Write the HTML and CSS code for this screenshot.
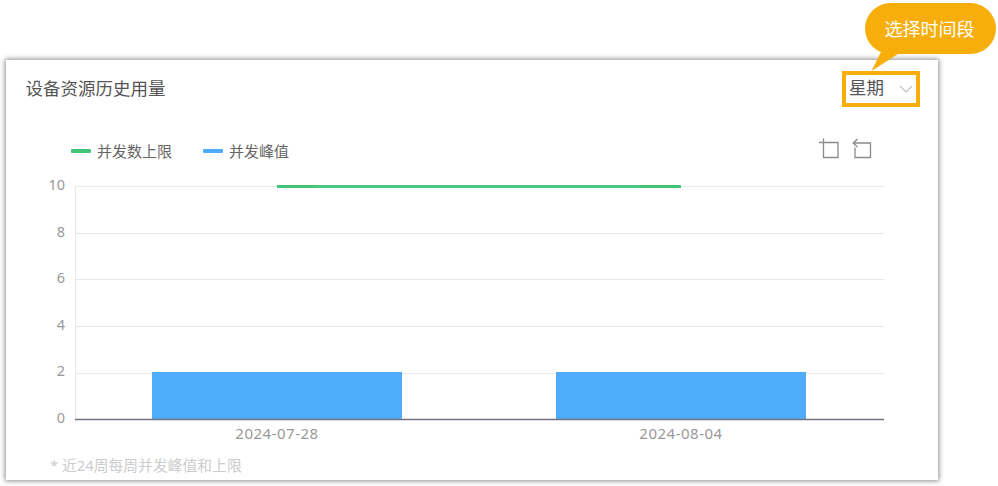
FILE: index.html
```html
<!DOCTYPE html>
<html lang="zh-CN">
<head>
<meta charset="utf-8">
<title>设备资源历史用量</title>
<link rel="stylesheet" href="styles.css">
</head>
<body>
<section class="card">
  <header class="card-head">
    <h2 class="title">设备资源历史用量</h2>
    <div class="select">
      <span class="select-value">星期</span>
      <svg class="chevron" width="14" height="8" viewBox="0 0 14 8"><path d="M1 1l6 6 6-6" fill="none" stroke="#c4c4c4" stroke-width="1.2"/></svg>
    </div>
  </header>
  <div class="toolbar">
    <ul class="legend">
      <li class="legend-item"><i class="swatch swatch-green"></i>并发数上限</li>
      <li class="legend-item"><i class="swatch swatch-blue"></i>并发峰值</li>
    </ul>
    <div class="tools">
      <svg width="20" height="20" viewBox="0 0 20 20"><path d="M0 3.500H19V18.500H4.500V-.500" fill="none" stroke="#8a8a8a" stroke-width="1.300"/></svg>
      <svg width="20" height="20" viewBox="0 0 20 20"><path d="M5.500 0L1.200 4 5.500 8M1.200 4H18.500V18.500H3V8.500" fill="none" stroke="#8a8a8a" stroke-width="1.300"/></svg>
    </div>
  </div>
  <svg class="chart" width="932" height="272" viewBox="0 0 932 272">
    <g class="grid">
      <line x1="69" x2="878" y1="19.500" y2="19.500"/>
      <line x1="69" x2="878" y1="66.500" y2="66.500"/>
      <line x1="69" x2="878" y1="112.500" y2="112.500"/>
      <line x1="69" x2="878" y1="159.500" y2="159.500"/>
      <line x1="69" x2="878" y1="206.500" y2="206.500"/>
      <line x1="69.500" x2="69.500" y1="19" y2="252"/>
    </g>
    <g class="y-labels">
      <text x="59" y="23">10</text>
      <text x="59" y="70">8</text>
      <text x="59" y="116">6</text>
      <text x="59" y="163">4</text>
      <text x="59" y="209">2</text>
      <text x="59" y="256">0</text>
    </g>
    <rect class="bar" x="146" y="205" width="250" height="47"/>
    <rect class="bar" x="550" y="205" width="250" height="47"/>
    <line class="limit" x1="311" x2="634" y1="19.500" y2="19.500"/>
    <line class="limit-end" x1="271" x2="311" y1="19.500" y2="19.500"/>
    <line class="limit-end" x1="634" x2="675" y1="19.500" y2="19.500"/>
    <line class="axis" x1="69" x2="878" y1="252.500" y2="252.500"/>
    <g class="x-labels">
      <text x="271" y="272">2024-07-28</text>
      <text x="675" y="272">2024-08-04</text>
    </g>
  </svg>
  <p class="note">* 近24周每周并发峰值和上限</p>
</section>
<div class="callout">
  <span>选择时间段</span>
  <svg class="callout-tail" width="34" height="22" viewBox="0 0 34 22"><path d="M10 0L.5 19 27 2z" fill="#f8ae0a"/></svg>
</div>
</body>
</html>
```

FILE: styles.css
```css
* { box-sizing: border-box; }
html, body { margin: 0; height: 100%; background: #fff; overflow: hidden; }
body {
  padding: 60px 0 0 6px;
  font-family: "Noto Sans", "Noto Sans CJK SC", sans-serif;
}
.card {
  width: 932px;
  height: 420px;
  background: #fff;
  box-shadow: 0 0 5px 1px rgba(0, 0, 0, .45);
  display: flex;
  flex-direction: column;
}
.card-head {
  display: flex;
  justify-content: space-between;
  align-items: flex-start;
  height: 37px;
  margin-top: 10px;
  padding: 0 18px 0 19.500px;
}
.title {
  margin: 0;
  font-size: 17.500px;
  font-weight: 400;
  color: #555;
  line-height: 36px;
}
.select {
  width: 78px;
  height: 36px;
  margin-top: 1px;
  border: 4px solid #f8ae0a;
  display: flex;
  align-items: center;
  justify-content: space-between;
  padding: 0 3px 6px 3px;
}
.select-value { font-size: 17.500px; color: #555; }
.chevron { margin-top: 6px; }
.toolbar {
  display: flex;
  justify-content: space-between;
  align-items: center;
  height: 36px;
  margin-top: 24px;
  padding: 0 66px 0 65px;
}
.legend {
  list-style: none;
  margin: 2px 0 0;
  padding: 0;
  display: flex;
  gap: 31px;
}
.legend-item {
  display: flex;
  align-items: center;
  gap: 6px;
  font-size: 15px;
  color: #666;
}
.swatch { display: block; width: 20px; height: 4px; border-radius: 1px; margin-top: 2px; }
.swatch-green { background: #44c478; }
.swatch-blue { background: #4fabfb; }
.tools { display: flex; gap: 13px; }
.tools svg { display: block; overflow: visible; }
.chart { display: block; overflow: visible; }
.grid line { stroke: #e6e8ec; stroke-width: 1; }
.y-labels text { font-size: 14.500px; fill: #999; text-anchor: end; }
.x-labels text { font-size: 15px; fill: #999; text-anchor: middle; letter-spacing: .5px; }
.bar { fill: #4fabfb; }
.limit { stroke: #4cc77f; stroke-width: 3; }
.limit-end { stroke: #44c478; stroke-width: 3; }
.axis { stroke: #6f7480; stroke-width: 1.500; }
.note {
  margin: 16px 0 0;
  padding-left: 44px;
  font-size: 14.800px;
  line-height: 20px;
  color: #ccc;
}
.callout {
  position: absolute;
  left: 865px;
  top: 3px;
  width: 131px;
  height: 51px;
  padding: 0 2px 2px 0;
  border-radius: 26px;
  background: #f8ae0a;
  color: #fff;
  font-size: 18px;
  display: flex;
  align-items: center;
  justify-content: center;
}
.callout-tail { position: absolute; left: 6px; top: 49px; }
```
